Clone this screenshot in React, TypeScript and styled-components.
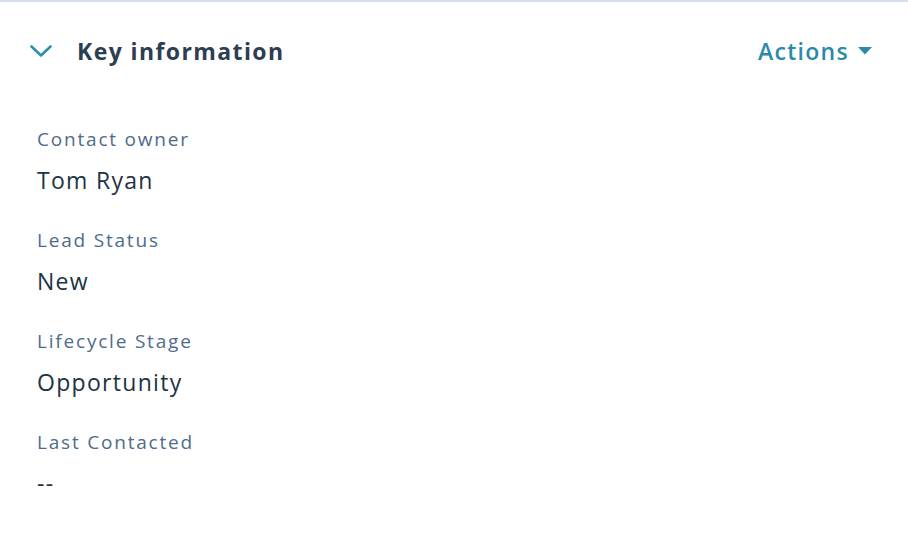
import React from 'react';
import styled, { createGlobalStyle } from 'styled-components';

const GlobalStyle = createGlobalStyle`
  html, body {
    margin: 0;
    padding: 0;
    background: #ffffff;
  }
  body {
    font-family: "Open Sans", "Noto Sans", sans-serif;
  }
  button {
    font-family: inherit;
  }
`;

const Card = styled.section`
  width: 908px;
  min-height: 551px;
  box-sizing: border-box;
  border-top: 2px solid #d6dfe8;
  background: #ffffff;
`;

const Header = styled.header`
  height: 50px;
  margin-top: 24px;
  padding: 0 36px 0 30px;
  display: flex;
  align-items: center;
  justify-content: space-between;
`;

const Toggle = styled.button`
  display: flex;
  align-items: center;
  gap: 25px;
  border: none;
  background: none;
  padding: 0;
  cursor: pointer;
`;

const Title = styled.h2`
  margin: 0;
  font-size: 23px;
  font-weight: 700;
  letter-spacing: 1.4px;
  color: #2d3e50;
`;

const ActionsButton = styled.button`
  display: flex;
  align-items: center;
  gap: 9px;
  border: none;
  background: none;
  padding: 0;
  font-size: 23px;
  font-weight: 600;
  letter-spacing: 1.3px;
  color: #2b8aa8;
  cursor: pointer;
`;

const Fields = styled.dl`
  margin: 50px 0 0;
  padding: 0 37px;
`;

const Field = styled.div`
  margin-bottom: 31px;
`;

const Label = styled.dt`
  font-size: 19px;
  line-height: 26px;
  letter-spacing: 1.8px;
  color: #4f6b8c;
  margin-bottom: 12px;
`;

const Value = styled.dd`
  margin: 0;
  font-size: 23px;
  line-height: 32px;
  letter-spacing: 1.3px;
  color: #213343;
`;

const Chevron = () => (
  <svg width="22" height="12" viewBox="0 0 22 12" fill="none">
    <path d="M1.5 1.5L11 10.5L20.5 1.5" stroke="#2f8faa" strokeWidth="2.6" strokeLinecap="round" strokeLinejoin="round" />
  </svg>
);

const Caret = () => (
  <svg width="14" height="8" viewBox="0 0 14 8">
    <path d="M0 0H14L7 7.5Z" fill="#2b8aa8" />
  </svg>
);

const fields = [
  { label: 'Contact owner', value: 'Tom Ryan' },
  { label: 'Lead Status', value: 'New' },
  { label: 'Lifecycle Stage', value: 'Opportunity' },
  { label: 'Last Contacted', value: '--' },
];

export default function App() {
  return (
    <>
      <GlobalStyle />
      <Card>
        <Header>
          <Toggle>
            <Chevron />
            <Title>Key information</Title>
          </Toggle>
          <ActionsButton>
            Actions
            <Caret />
          </ActionsButton>
        </Header>
        <Fields>
          {fields.map((f) => (
            <Field key={f.label}>
              <Label>{f.label}</Label>
              <Value>{f.value}</Value>
            </Field>
          ))}
        </Fields>
      </Card>
    </>
  );
}
